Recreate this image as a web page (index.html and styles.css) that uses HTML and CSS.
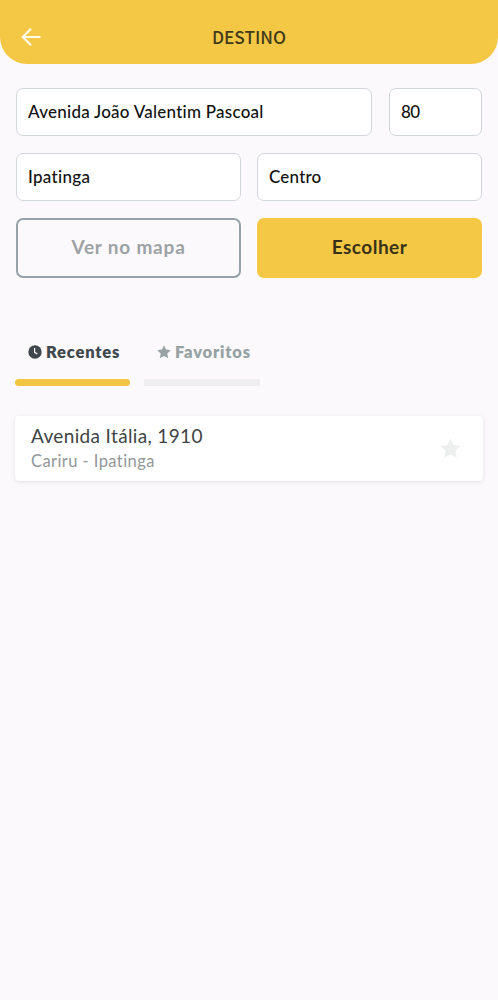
FILE: index.html
```html
<!DOCTYPE html>
<html lang="pt-BR">
<head>
<meta charset="utf-8">
<meta name="viewport" content="width=device-width">
<title>Destino</title>
<link rel="stylesheet" href="styles.css">
</head>
<body>
<header class="header">
  <svg class="back" viewBox="0 0 20 20" role="img" aria-label="Voltar"><path d="M10 1.800 1.800 10l8.200 8.200M2 10h17.500"/></svg>
  <h1 class="title">DESTINO</h1>
</header>
<main class="content">
  <form class="form">
    <div class="row row-address">
      <div class="field"><span class="address">Avenida João Valentim Pascoal</span></div>
      <div class="field"><span class="number">80</span></div>
    </div>
    <div class="row">
      <div class="field"><span class="city">Ipatinga</span></div>
      <div class="field"><span class="district">Centro</span></div>
    </div>
    <div class="row">
      <button type="button" class="button outline">Ver no mapa</button>
      <button type="button" class="button primary">Escolher</button>
    </div>
  </form>
  <nav class="tabs">
    <div class="tab active">
      <div class="tab-label">
        <svg class="tab-icon" viewBox="0 0 14 14"><circle cx="7" cy="7" r="6.700" fill="currentColor"/><path d="M6.600 3v4.300l2.800 1.800" fill="none" stroke="#fff" stroke-width="1.200"/></svg>
        <span>Recentes</span>
      </div>
      <div class="tab-bar"></div>
    </div>
    <div class="tab">
      <div class="tab-label">
        <svg class="tab-icon" viewBox="0 0 20 20"><path fill="currentColor" d="m10 .5 2.900 6.100 6.700.9-4.900 4.600 1.200 6.700-5.900-3.200-5.900 3.200 1.200-6.700L.4 7.500l6.700-.9z"/></svg>
        <span>Favoritos</span>
      </div>
      <div class="tab-bar"></div>
    </div>
  </nav>
  <article class="card">
    <div class="card-text">
      <div class="street">Avenida Itália, 1910</div>
      <div class="place">Cariru - Ipatinga</div>
    </div>
    <svg class="star" viewBox="0 0 20 20"><path fill="currentColor" d="m10 .5 2.900 6.100 6.700.9-4.900 4.600 1.200 6.700-5.900-3.200-5.900 3.200 1.200-6.700L.4 7.500l6.700-.9z"/></svg>
  </article>
</main>
</body>
</html>
```
FILE: styles.css
```css
* { box-sizing: border-box; }
body { margin: 0; min-height: 1000px; background: #fbf9fc; font-family: Lato, sans-serif; font-variant-ligatures: none; color: #111; }
.header { display: grid; grid-template-columns: 40px 1fr 40px; align-items: center; height: 64px; padding: 10px 21px 0; background: #f4c744; border-radius: 0 0 27px 27px; }
.back { width: 20px; height: 20px; fill: none; stroke: #fffbea; stroke-width: 2.2; }
.title { margin: 0; text-align: center; font: 500 17.3px/24px "Noto Sans CJK JP", sans-serif; color: #403a1c; }
.content { padding: 24px 15px 0; }
.form { display: grid; gap: 17px; padding: 0 1px; }
.row { display: grid; grid-template-columns: 1fr 1fr; gap: 16px; }
.row-address { grid-template-columns: 1fr 93px; gap: 17px; }
.field { display: flex; align-items: center; height: 48px; padding: 0 11px 2px; border: 1px solid #d2d7db; border-radius: 7px; background: #fff; font-size: 17px; font-weight: 500; white-space: nowrap; }
.address { letter-spacing: .25px; }
.number { letter-spacing: -.6px; }
.city { letter-spacing: .3px; }
.district { letter-spacing: .2px; }
.button { height: 60px; margin: 0; padding: 0 0 3px; border: 0; border-radius: 7px; font: 700 19px Lato, sans-serif; }
.outline { border: 2px solid #96a2aa; background: transparent; color: #9ba2a4; letter-spacing: .8px; }
.primary { background: #f4c744; color: #373218; letter-spacing: .5px; }
.tabs { display: flex; gap: 14px; margin-top: 62px; }
.tab { width: 115px; color: #96a2a3; }
.tab + .tab { width: 116px; }
.tab-label { display: flex; align-items: center; gap: 4px; height: 24px; margin-bottom: 15px; padding-left: 13px; font-size: 16.5px; font-weight: 800; letter-spacing: .8px; white-space: nowrap; }
.tab-icon { width: 14px; height: 14px; flex: none; }
.tab-bar { height: 7px; background: #eeedef; }
.active { color: #3f484c; }
.active .tab-bar { background: #f1c542; border-radius: 4px; }
.card { display: flex; align-items: center; justify-content: space-between; height: 65px; margin-top: 30px; padding: 0 22px 0 16px; border-radius: 4px; background: #fff; box-shadow: 0 1px 4px #00000018; }
.card-text { padding-bottom: 2px; }
.street { font-size: 19px; line-height: 26px; letter-spacing: .35px; color: #404446; }
.place { font-size: 16.5px; line-height: 24px; letter-spacing: .42px; color: #929799; }
.star { width: 21px; height: 21px; color: #edefef; }
```
